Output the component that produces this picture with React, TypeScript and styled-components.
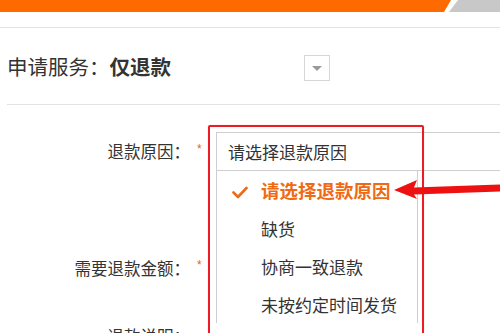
import React from 'react';
import styled, { createGlobalStyle } from 'styled-components';

const GlobalStyle = createGlobalStyle`
  html, body {
    margin: 0;
    padding: 0;
    background: #fff;
  }
  body {
    font-family: "Noto Sans CJK SC", "Noto Sans", sans-serif;
    color: #333;
  }
`;

const Page = styled.div`
  position: relative;
  width: 500px;
  height: 333px;
  overflow: hidden;
  background: #fff;
`;

const Banner = styled.svg`
  display: block;
`;

const Rule = styled.div<{ $inset?: number; $top?: number }>`
  height: 1px;
  background: #e3e3e3;
  margin-left: ${(p) => p.$inset ?? 0}px;
  margin-top: ${(p) => p.$top ?? 0}px;
`;

const ServiceRow = styled.div`
  display: flex;
  align-items: center;
  height: 76px;
  padding-left: 7px;
  font-size: 20.5px;
  line-height: 1;
`;

const ServiceLabel = styled.span`
  color: #333;
`;

const ServiceValue = styled.span`
  font-weight: 700;
  color: #333;
`;

const MiniSelect = styled.div`
  width: 24px;
  height: 24px;
  margin-left: 133px;
  margin-top: 4px;
  border: 1px solid #d6d6d6;
  display: flex;
  align-items: center;
  justify-content: center;

  &::after {
    content: '';
    border-left: 5px solid transparent;
    border-right: 5px solid transparent;
    border-top: 5px solid #9a9a9a;
  }
`;

const Form = styled.div`
  padding-top: 27px;
`;

const Row = styled.div<{ $top?: number }>`
  display: flex;
  align-items: center;
  min-height: 38px;
  margin-top: ${(p) => p.$top ?? 0}px;
`;

const Label = styled.div`
  width: 190px;
  text-align: right;
  font-size: 16.5px;
  color: #333;
  line-height: 1;
`;

const Star = styled.span`
  width: 26px;
  padding-left: 7px;
  box-sizing: border-box;
  color: #f0593a;
  font-size: 12px;
  margin-top: -6px;
  font-family: "Liberation Sans", sans-serif;
`;

const Field = styled.div`
  position: relative;
  flex: 1;
`;

const Select = styled.div`
  height: 37px;
  border: 1px solid #cfcfcf;
  border-right: none;
  display: flex;
  align-items: center;
  padding-left: 11px;
  font-size: 17px;
  color: #333;
`;

const Options = styled.ul`
  position: absolute;
  top: 100%;
  left: 0;
  width: 200px;
  margin: 0;
  padding: 0;
  list-style: none;
  background: #fff;
  border-left: 1px solid #cfcfcf;
  border-right: 1px solid #cfcfcf;
  z-index: 2;
`;

const Option = styled.li<{ $active?: boolean }>`
  position: relative;
  height: 38px;
  display: flex;
  align-items: center;
  padding-left: 44px;
  font-size: ${(p) => (p.$active ? '18.5px' : '17px')};
  font-weight: ${(p) => (p.$active ? 700 : 400)};
  color: ${(p) => (p.$active ? '#f06a14' : '#333')};
`;

const Check = styled.svg`
  position: absolute;
  left: 15px;
  top: 15px;
`;

const Callout = styled.div`
  position: absolute;
  left: 208px;
  top: 125px;
  width: 212px;
  height: 240px;
  border: 2px solid #ec1c24;
  box-shadow: 0 0 1px #f59a9a;
  border-radius: 2px;
  z-index: 3;
  pointer-events: none;
`;

const Arrow = styled.svg`
  position: absolute;
  left: 390px;
  top: 172px;
  z-index: 4;
`;

const reasons = ['请选择退款原因', '缺货', '协商一致退款', '未按约定时间发货'];

export default function App() {
  return (
    <>
      <GlobalStyle />
      <Page>
        <Banner width="500" height="12" viewBox="0 0 500 12">
          <rect width="500" height="12" fill="#fff" />
          <polygon points="0,0 451,0 444,12 0,12" fill="#ff6a00" />
          <polygon points="458,0 500,0 500,12 449,12" fill="#c8c8c8" />
        </Banner>
        <Rule $top={15} />
        <ServiceRow>
          <ServiceLabel>申请服务：</ServiceLabel>
          <ServiceValue>仅退款</ServiceValue>
          <MiniSelect />
        </ServiceRow>
        <Rule $inset={7} />
        <Form>
          <Row>
            <Label>退款原因：</Label>
            <Star>*</Star>
            <Field>
              <Select>请选择退款原因</Select>
              <Options>
                {reasons.map((r, i) => (
                  <Option key={r} $active={i === 0}>
                    {i === 0 && (
                      <Check width="16" height="13" viewBox="0 0 16 13">
                        <path
                          d="M1.5 6.5 L6 11 L14.5 2"
                          fill="none"
                          stroke="#f06a14"
                          strokeWidth="2.6"
                          strokeLinecap="round"
                          strokeLinejoin="round"
                        />
                      </Check>
                    )}
                    {r}
                  </Option>
                ))}
              </Options>
            </Field>
          </Row>
          <Row $top={78}>
            <Label>需要退款金额：</Label>
            <Star>*</Star>
            <Field />
          </Row>
          <Row $top={30}>
            <Label>退款说明：</Label>
            <Star />
            <Field />
          </Row>
        </Form>
        <Callout />
        <Arrow width="110" height="30" viewBox="0 0 110 30">
          <polygon points="4,18 27,8 24,15.5 110,12.5 110,19.5 24,22.5 27,27" fill="#ee1111" />
        </Arrow>
      </Page>
    </>
  );
}
